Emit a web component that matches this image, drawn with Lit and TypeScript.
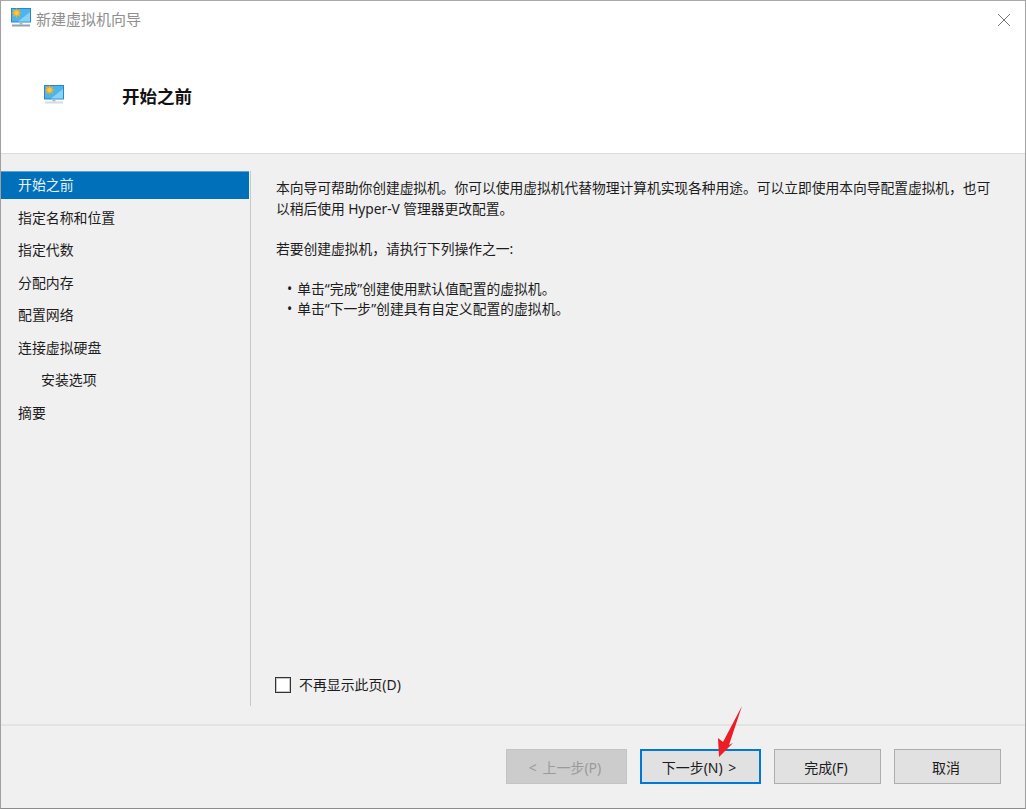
import { LitElement, html, css, svg } from "lit";
import { customElement } from "lit/decorators.js";

const steps = [
  { label: "开始之前", selected: true },
  { label: "指定名称和位置" },
  { label: "指定代数" },
  { label: "分配内存" },
  { label: "配置网络" },
  { label: "连接虚拟硬盘" },
  { label: "安装选项", sub: true },
  { label: "摘要" },
];

const monitor = (base: string) => html`<svg width="20" height="19" viewBox="0 0 20 19">
  <rect x="0" y="0" width="20" height="14.5" fill="#2a86c8"/>
  <rect x="1" y="1" width="18" height="12.5" fill="#4db4ec"/>
  <path d="M7 13.5 L19 4 V13.5 Z" fill="#86d3f6"/>
  <path d="M5.5 0 L6.6 2.6 L9.2 1.4 L8.2 4 L10.8 5 L8.2 6.1 L9.2 8.8 L6.6 7.6 L5.5 10.2 L4.4 7.6 L1.8 8.8 L2.8 6.1 L0.2 5 L2.8 4 L1.8 1.4 L4.4 2.6 Z" fill="#f5ae22"/>
  <circle cx="5.5" cy="5" r="2.2" fill="#fbc84a"/>
  <rect x="8.5" y="14.5" width="3" height="2" fill="#a9b7c2"/>
  <rect x="1" y="16.5" width="18" height="2" fill=${base}/>
</svg>`;

const arrow = svg`<path d="M742 706 L723 742 L718 738 L719 757 L733 743 L729 745 Z" fill="#ee1c25"/>`;

@customElement("app-root")
export class AppRoot extends LitElement {
  static styles = css`
    :host {
      display: block;
      width: 1026px;
      height: 809px;
      overflow: hidden;
      position: relative;
      font-family: "Noto Sans", "Noto Sans CJK SC", sans-serif;
      font-size: 13.9px;
      color: #1c1c1c;
    }
    .window {
      box-sizing: border-box;
      width: 1026px;
      height: 809px;
      display: flex;
      flex-direction: column;
      background: #f0f0f0;
      border-top: 1px solid #a8a8a8;
      border-left: 1px solid #a0a0a0;
      border-right: 1px solid #a0a0a0;
      border-bottom: 1px solid #8c8c8c;
    }
    .titlebar {
      height: 37px;
      flex: none;
      display: flex;
      align-items: center;
      padding-left: 10px;
      background: #fff;
      color: #8f8f8f;
      font-size: 15px;
      gap: 5px;
    }
    .titlebar .mon { display: flex; margin-top: -4px; }
    .titlebar span { margin-top: -3px; }
    .close {
      margin-left: auto;
      margin-right: 15px;
      margin-top: 1px;
      display: flex;
    }
    .header {
      height: 115px;
      flex: none;
      background: #fff;
      border-bottom: 1px solid #dcdcdc;
      display: flex;
      align-items: center;
      padding-left: 43px;
    }
    .header .mon { display: flex; margin-top: -2px; }
    .header h1 {
      margin: 0 0 0 58px;
      font-size: 17.5px;
      font-weight: 700;
      color: #111;
      line-height: 24px;
    }
    .body {
      flex: 1;
      display: flex;
      padding-top: 17px;
      padding-bottom: 18px;
      min-height: 0;
      border-bottom: 2px solid #e3e3e3;
    }
    .nav {
      width: 249px;
      flex: none;
      border-right: 1px solid #c9c9c9;
    }
    .nav-item {
      height: 28px;
      line-height: 28px;
      margin-bottom: 4.5px;
      padding-left: 17px;
      margin-right: 1px;
      white-space: nowrap;
    }
    .nav-item.sel {
      background: #0070bb;
      color: #e9f2f8;
      box-shadow: inset 0 1px 0 #5aa3d4;
    }
    .nav-item.sub { padding-left: 40px; }
    .content {
      flex: 1;
      display: flex;
      flex-direction: column;
      padding: 7px 24px 0 25px;
      min-width: 0;
    }
    .content p {
      margin: 0 0 18px;
      line-height: 20.5px;
      font-size: 13.8px;
      letter-spacing: -0.06px;
    }
    .content p + p { margin-top: 2px; }
    .content ul {
      list-style: none;
      margin: 0;
      padding: 1px 0 0 11px;
      line-height: 20px;
      font-size: 13.8px;
    }
    .content li::before { content: "•"; margin-right: 5px; }
    .check {
      margin-top: auto;
      margin-bottom: 12px;
      margin-left: -1px;
      display: flex;
      align-items: center;
      gap: 8px;
    }
    .box {
      width: 16px;
      height: 16px;
      box-sizing: border-box;
      border: 1px solid #333;
      background: #fff;
      box-shadow: inset 0 0 0 1px rgba(0, 0, 0, 0.22);
      margin-top: 2px;
    }
    .footer {
      height: 82px;
      flex: none;
      display: flex;
      justify-content: flex-end;
      gap: 13px;
      padding: 23px 24px 0 0;
      box-sizing: border-box;
    }
    .btn {
      box-sizing: border-box;
      width: 107px;
      height: 35px;
      padding-right: 3px;
      border: 1px solid #adadad;
      background: #e1e1e1;
      display: flex;
      align-items: center;
      justify-content: center;
      font-size: 14px;
      word-spacing: 2px;
    }
    .btn.wide { width: 121px; }
    .btn.disabled { background: #cccccc; border-color: #c4c4c4; color: #9a9a9a; }
    .btn.primary { border: 2px solid #0078d7; }
    .arrow { position: absolute; left: 0; top: 0; pointer-events: none; }
  `;

  render() {
    return html`
      <div class="window">
        <div class="titlebar">
          <div class="mon">${monitor("#8da3b5")}</div>
          <span>新建虚拟机向导</span>
          <div class="close">
            <svg width="12" height="12" viewBox="0 0 12 12">
              <path d="M0 0 L12 12 M12 0 L0 12" stroke="#777" stroke-width="1" fill="none"/>
            </svg>
          </div>
        </div>
        <div class="header">
          <div class="mon">${monitor("#d3dae0")}</div>
          <h1>开始之前</h1>
        </div>
        <div class="body">
          <div class="nav">
            ${steps.map(
              (s) => html`<div class="nav-item ${s.selected ? "sel" : ""} ${s.sub ? "sub" : ""}">${s.label}</div>`
            )}
          </div>
          <div class="content">
            <p>本向导可帮助你创建虚拟机。你可以使用虚拟机代替物理计算机实现各种用途。可以立即使用本向导配置虚拟机，也可以稍后使用 Hyper-V 管理器更改配置。</p>
            <p>若要创建虚拟机，请执行下列操作之一:</p>
            <ul>
              <li>单击“完成”创建使用默认值配置的虚拟机。</li>
              <li>单击“下一步”创建具有自定义配置的虚拟机。</li>
            </ul>
            <div class="check"><div class="box"></div><span>不再显示此页(D)</span></div>
          </div>
        </div>
        <div class="footer">
          <div class="btn wide disabled">&lt; 上一步(P)</div>
          <div class="btn wide primary">下一步(N) &gt;</div>
          <div class="btn">完成(F)</div>
          <div class="btn">取消</div>
        </div>
      </div>
      <svg class="arrow" width="1026" height="809">${arrow}</svg>
    `;
  }
}
